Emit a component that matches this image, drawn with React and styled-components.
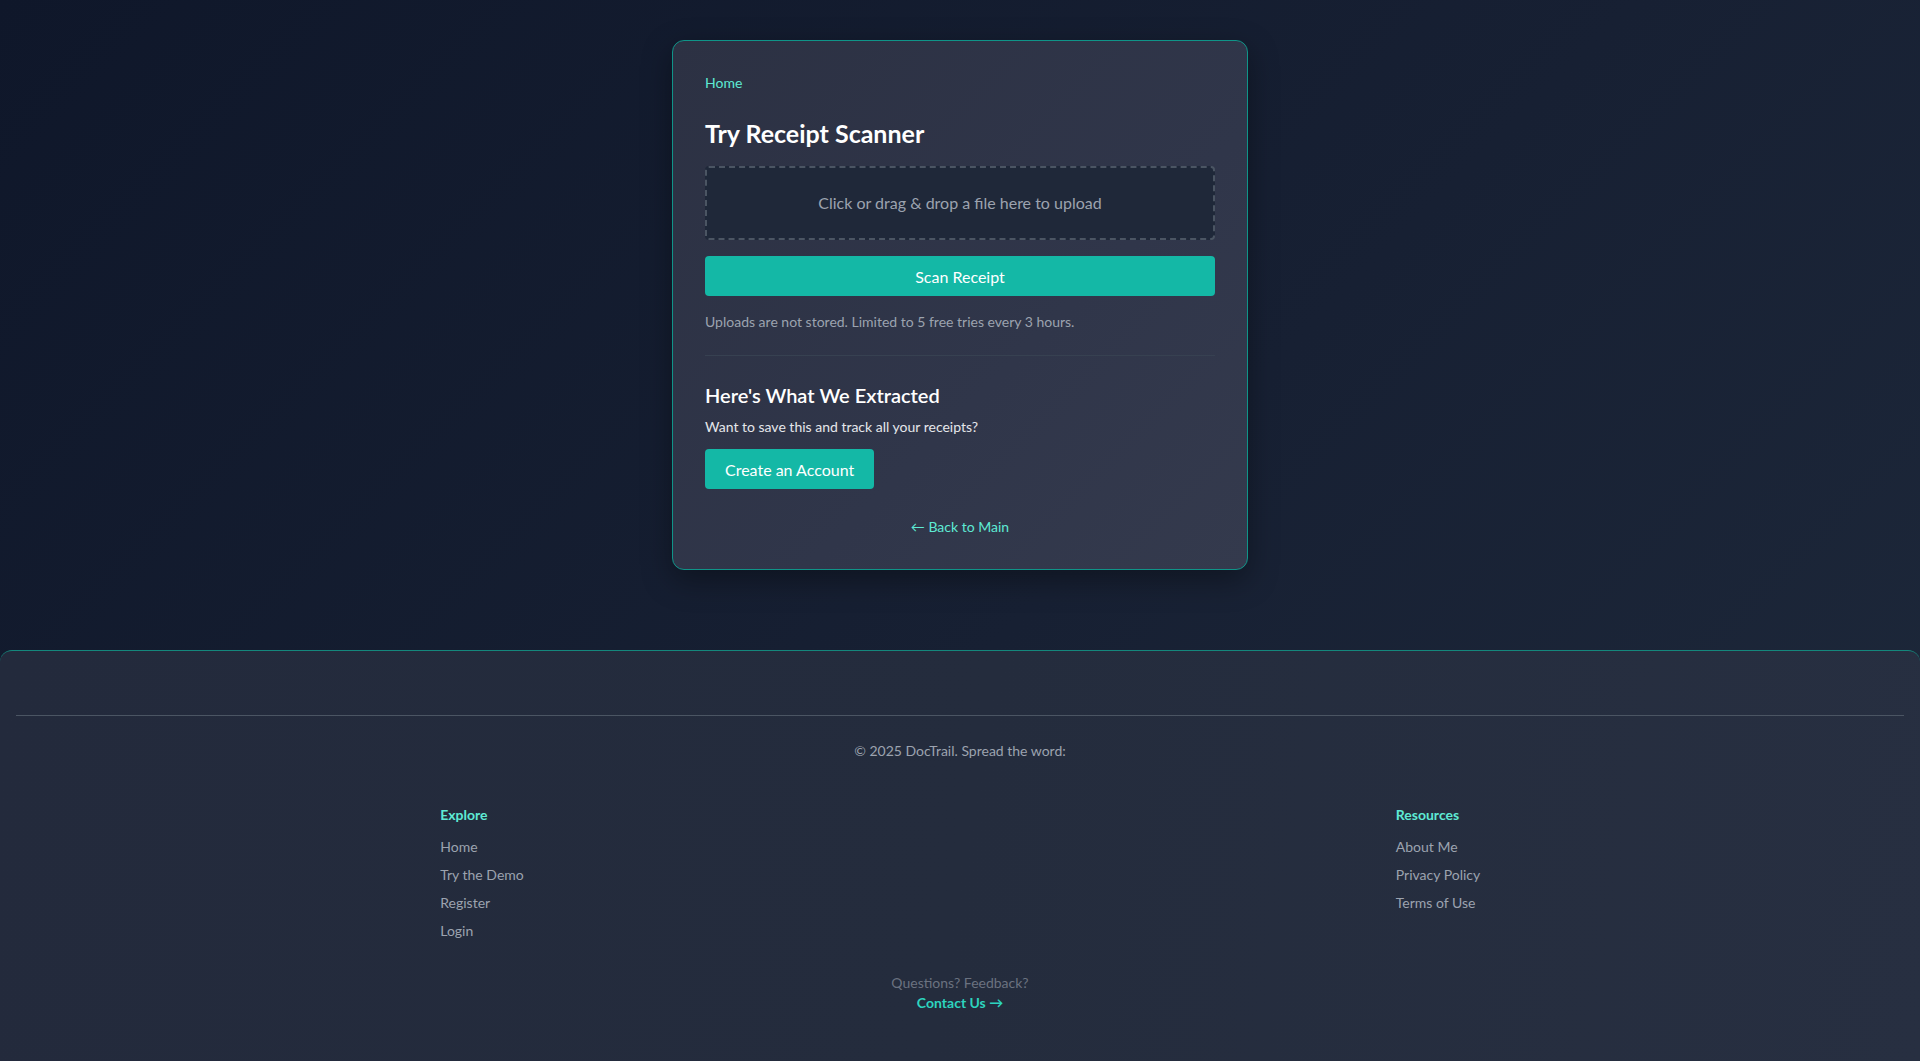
import React from 'react'
import styled, { createGlobalStyle } from 'styled-components';

const GlobalStyle = createGlobalStyle`
  * {
    box-sizing: border-box;
  }
  body {
    margin: 0;
    min-height: 100vh;
    font-family: "Segoe UI", Lato, "Noto Sans", sans-serif;
    background: linear-gradient(135deg, #0f172a 0%, #172033 55%, #1e293b 100%);
    background-attachment: fixed;
    color: #f3f4f6;
  }
`

const Page = styled.div`
    min-height: 100vh;
    display: flex;
    flex-direction: column;
`
const Main = styled.main`
    flex: 1;
    display: flex;
    justify-content: center;
    align-items: flex-start;
    padding: 40px 16px 80px;
`
const Card = styled.section`
    width: 100%;
    max-width: 576px;
    padding: 32px;
    border: 1px solid #0f9488;
    border-radius: 12px;
    background: linear-gradient(135deg, #2c3143 0%, #30364a 60%, #343a4d 100%);
    box-shadow: 0 10px 30px rgba(0, 0, 0, 0.35);
`
const Crumb = styled.a`
    display: block;
    font-size: 14px;
    line-height: 20px;
    color: #5eead4;
    text-decoration: none;
    margin-bottom: 24px;
    cursor: pointer;
`
const Title = styled.h1`
    margin: 0 0 16px;
    font-size: 25px;
    line-height: 33px;
    font-weight: 700;
    color: #fff;
`
const Drop = styled.div`
    padding: 23px 16px;
    border: 2px dashed #4b5563;
    border-radius: 4px;
    background: #1f2839;
    text-align: center;
    font-size: 16px;
    line-height: 24px;
    color: #9ca3af;
    cursor: pointer;
`
const Button = styled.button`
    display: block;
    width: ${(p) => (p.full ? '100%' : 'auto')};
    height: 40px;
    padding: 0 20px;
    margin-top: ${(p) => (p.full ? '16px' : '0')};
    border: none;
    border-radius: 4px;
    background-color: #14b8a6;
    color: #fff;
    font-family: inherit;
    font-size: 16px;
    cursor: pointer;
    &:hover{
        background-color: #0d9488;
    }
`
const Note = styled.p`
    margin: 16px 0 0;
    font-size: 14px;
    line-height: 20px;
    color: #9ca3af;
`
const Divider = styled.hr`
    margin: 23px 0 25px;
    border: none;
    border-top: 1px solid #374151;
`
const SubTitle = styled.h2`
    margin: 0 0 8px;
    font-size: 20px;
    line-height: 28px;
    font-weight: 600;
    color: #fff;
`
const Text = styled.p`
    margin: 0 0 12px;
    font-size: 14px;
    line-height: 20px;
    color: #e5e7eb;
`
const BackLink = styled.a`
    display: block;
    margin-top: 28px;
    text-align: center;
    font-size: 14px;
    line-height: 20px;
    color: #5eead4;
    text-decoration: none;
    cursor: pointer;
`

const Footer = styled.footer`
    padding: 0 16px 56px;
    border-top: 1px solid #14877c;
    border-radius: 12px 12px 0 0;
    background: linear-gradient(100deg, #232a3c 0%, #242c3d 50%, #272f41 100%);
`
const ShareArea = styled.div`
    height: 65px;
    border-bottom: 1px solid #4b5563;
`
const Copy = styled.p`
    margin: 25px 0 44px;
    text-align: center;
    font-size: 14px;
    line-height: 20px;
    color: #9ca3af;
`
const Columns = styled.div`
    display: grid;
    grid-template-columns: 1fr 1fr;
    gap: 24px;
    justify-items: center;
`
const Column = styled.div`
    display: flex;
    flex-direction: column;
    gap: 8px;
`
const ColTitle = styled.h3`
    margin: 0 0 4px;
    font-size: 14px;
    line-height: 20px;
    font-weight: 700;
    color: #5eead4;
`
const FootLink = styled.a`
    font-size: 14px;
    line-height: 20px;
    color: #9ca3af;
    text-decoration: none;
    cursor: pointer;
`
const Contact = styled.div`
    margin-top: 32px;
    text-align: center;
    font-size: 14px;
    line-height: 20px;
`
const Muted = styled.div`
    color: #6b7280;
`
const ContactLink = styled.a`
    font-weight: 700;
    color: #2dd4bf;
    text-decoration: none;
    cursor: pointer;
`

const explore = ['Home', 'Try the Demo', 'Register', 'Login'];
const resources = ['About Me', 'Privacy Policy', 'Terms of Use'];

const App = () => {
  return (
    <>
      <GlobalStyle />
      <Page>
        <Main>
          <Card>
            <Crumb>Home</Crumb>
            <Title>Try Receipt Scanner</Title>
            <Drop>Click or drag &amp; drop a file here to upload</Drop>
            <Button full>Scan Receipt</Button>
            <Note>Uploads are not stored. Limited to 5 free tries every 3 hours.</Note>
            <Divider />
            <SubTitle>Here's What We Extracted</SubTitle>
            <Text>Want to save this and track all your receipts?</Text>
            <Button>Create an Account</Button>
            <BackLink>← Back to Main</BackLink>
          </Card>
        </Main>

        <Footer>
          <ShareArea />
          <Copy>© 2025 DocTrail. Spread the word:</Copy>
          <Columns>
            <Column>
              <ColTitle>Explore</ColTitle>
              {explore.map((l) => <FootLink key={l}>{l}</FootLink>)}
            </Column>
            <Column>
              <ColTitle>Resources</ColTitle>
              {resources.map((l) => <FootLink key={l}>{l}</FootLink>)}
            </Column>
          </Columns>
          <Contact>
            <Muted>Questions? Feedback?</Muted>
            <ContactLink>Contact Us →</ContactLink>
          </Contact>
        </Footer>
      </Page>
    </>
  )
}

export default App;
